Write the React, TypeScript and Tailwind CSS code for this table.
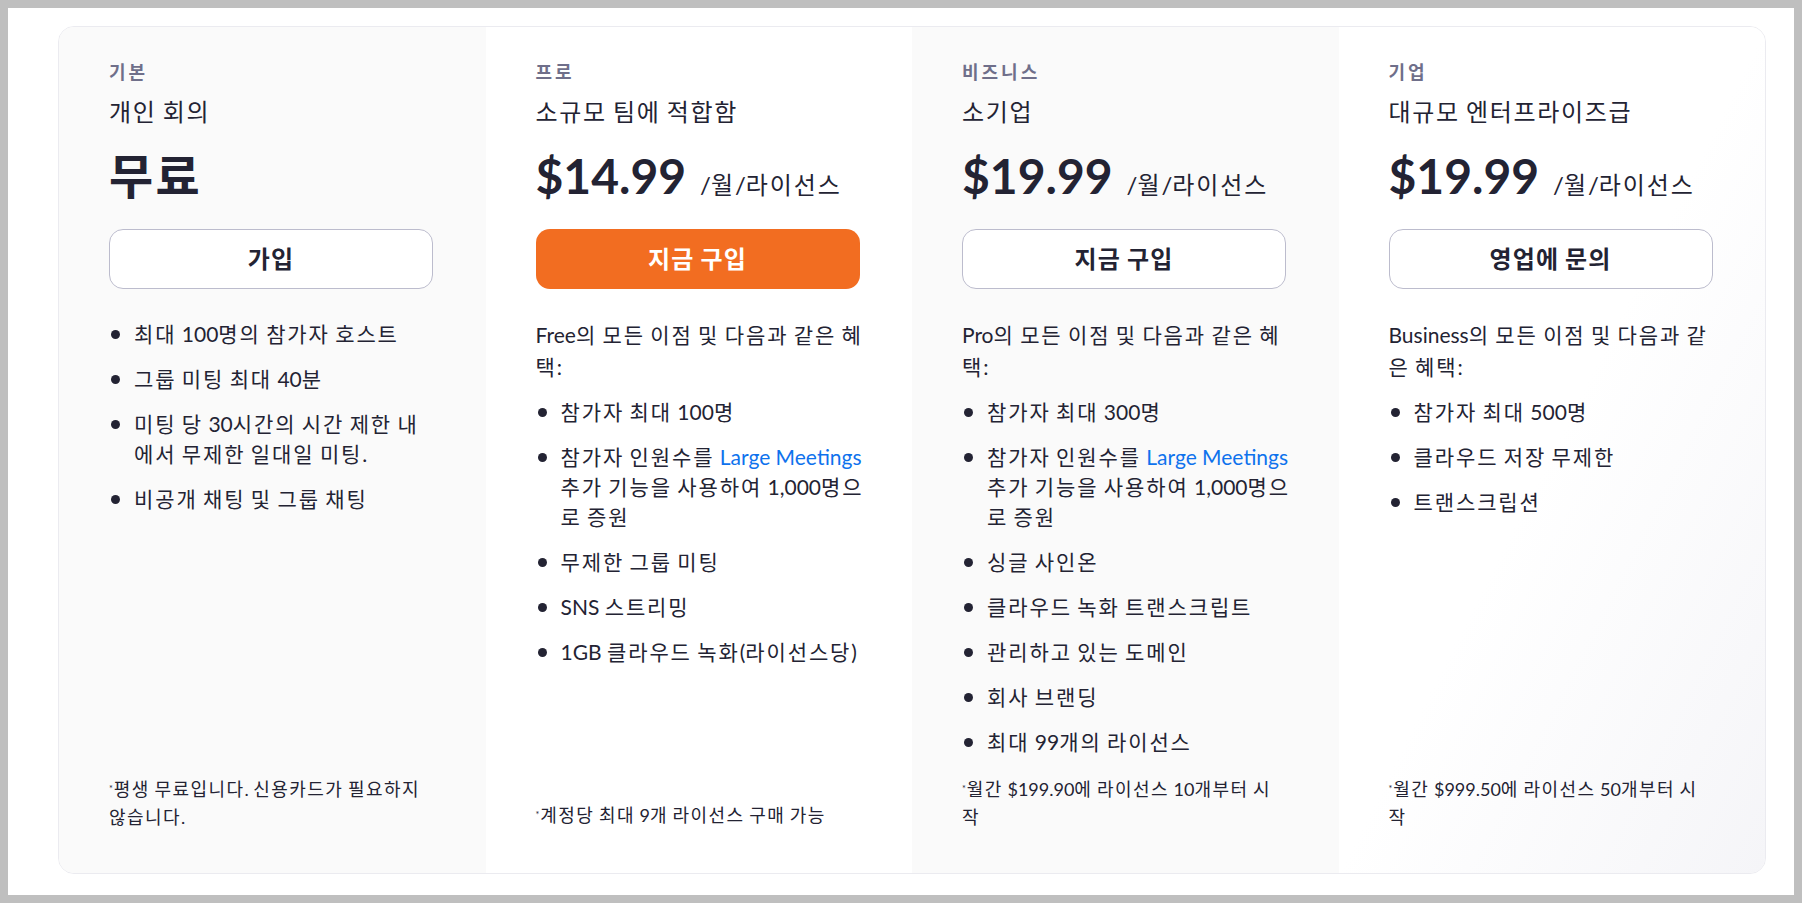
import React from "react";

const HANGUL = /([\u1100-\u11FF\u3130-\u318F\uAC00-\uD7AF]+)/;

const k = (s: string, cls: string, keyBase: string) =>
  s.split(HANGUL).map((part, i) =>
    i % 2 === 1 ? (
      <span key={keyBase + i} className={cls}>
        {part}
      </span>
    ) : (
      <React.Fragment key={keyBase + i}>{part}</React.Fragment>
    )
  );

const render = (s: string, cls: string) => {
  const lines = s.split("\n");
  return lines.map((line, li) => {
    const parts = line.split(/(\[\[.*?\]\])/);
    return (
      <React.Fragment key={li}>
        {li > 0 && <br />}
        {parts.map((p, pi) =>
          p.startsWith("[[") ? (
            <span key={pi} className="text-[#0e72ed]">
              {p.slice(2, -2)}
            </span>
          ) : (
            <React.Fragment key={pi}>{k(p, cls, `${li}-${pi}-`)}</React.Fragment>
          )
        )}
      </React.Fragment>
    );
  });
};

const Star = () => (
  <span className="relative -top-[2px] mr-[1px] align-middle text-[9px]">*</span>
);

type Plan = {
  label: string;
  title: string;
  price: string;
  suffix?: string;
  button: string;
  primary?: boolean;
  intro?: string;
  items: string[];
  note: string;
  bg: string;
};

const plans: Plan[] = [
  {
    label: "기본",
    title: "개인 회의",
    price: "무료",
    button: "가입",
    items: [
      "최대 100명의 참가자 호스트",
      "그룹 미팅 최대 40분",
      "미팅 당 30시간의 시간 제한 내\n에서 무제한 일대일 미팅.",
      "비공개 채팅 및 그룹 채팅",
    ],
    note: "평생 무료입니다. 신용카드가 필요하지\n않습니다.",
    bg: "bg-[#fafafa]",
  },
  {
    label: "프로",
    title: "소규모 팀에 적합함",
    price: "$14.99",
    suffix: "/월/라이선스",
    button: "지금 구입",
    primary: true,
    intro: "Free의 모든 이점 및 다음과 같은 혜\n택:",
    items: [
      "참가자 최대 100명",
      "참가자 인원수를 [[Large Meetings]]\n추가 기능을 사용하여 1,000명으\n로 증원",
      "무제한 그룹 미팅",
      "SNS 스트리밍",
      "1GB 클라우드 녹화(라이선스당)",
    ],
    note: "계정당 최대 9개 라이선스 구매 가능",
    bg: "bg-white",
  },
  {
    label: "비즈니스",
    title: "소기업",
    price: "$19.99",
    suffix: "/월/라이선스",
    button: "지금 구입",
    intro: "Pro의 모든 이점 및 다음과 같은 혜\n택:",
    items: [
      "참가자 최대 300명",
      "참가자 인원수를 [[Large Meetings]]\n추가 기능을 사용하여 1,000명으\n로 증원",
      "싱글 사인온",
      "클라우드 녹화 트랜스크립트",
      "관리하고 있는 도메인",
      "회사 브랜딩",
      "최대 99개의 라이선스",
    ],
    note: "월간 $199.90에 라이선스 10개부터 시\n작",
    bg: "bg-[#fafafa]",
  },
  {
    label: "기업",
    title: "대규모 엔터프라이즈급",
    price: "$19.99",
    suffix: "/월/라이선스",
    button: "영업에 문의",
    intro: "Business의 모든 이점 및 다음과 같\n은 혜택:",
    items: ["참가자 최대 500명", "클라우드 저장 무제한", "트랜스크립션"],
    note: "월간 $999.50에 라이선스 50개부터 시\n작",
    bg: "bg-linear-to-br from-white via-white to-[#f5f5f8]",
  },
];

const Column = ({ p }: { p: Plan }) => (
  <div className={`flex flex-col pl-[50px] pr-[52px] pt-[33px] pb-[43px] ${p.bg}`}>
    <div className="text-[18px] leading-[24px] font-semibold tracking-[3px] text-[#6f6f8a]">
      {p.label}
    </div>
    <div className="mt-[12px] whitespace-nowrap text-[24px] leading-[32px] text-[#232333]">
      {render(p.title, "tracking-[0.07em]")}
    </div>
    <div className="mt-[20px] flex h-[56px] items-baseline whitespace-nowrap text-[#232333]">
      <span className="text-[48px] leading-[56px] font-bold">
        {render(p.price, "tracking-[0.05em]")}
      </span>
      {p.suffix && (
        <span className="ml-[14px] text-[24px] leading-[32px]">
          {render(p.suffix, "tracking-[0.08em]")}
        </span>
      )}
    </div>
    <button
      className={
        p.primary
          ? "mt-[25px] h-[60px] w-[324px] rounded-[14px] bg-[#f26d21] text-[24px] font-bold text-white"
          : "mt-[25px] h-[60px] w-[324px] rounded-[14px] border border-[#bcbccd] bg-white text-[24px] font-bold text-[#232333]"
      }
    >
      {render(p.button, "tracking-[0.05em]")}
    </button>
    <div className="mt-[30px] text-[21px] text-[#232333]">
      {p.intro && (
        <div className="mb-[14px] whitespace-nowrap leading-[32px]">
          {render(p.intro, "tracking-[0.09em]")}
        </div>
      )}
      <ul className="flex flex-col gap-[15px] leading-[30px]">
        {p.items.map((it, i) => (
          <li key={i} className="flex items-start">
            <span className="mt-[11px] ml-[2px] mr-[14px] h-[9px] w-[9px] shrink-0 rounded-full bg-[#232333]" />
            <span className="whitespace-nowrap">{render(it, "tracking-[0.09em]")}</span>
          </li>
        ))}
      </ul>
    </div>
    <div className="mt-auto flex min-h-[52px] items-end">
      <div className="whitespace-nowrap text-[18px] leading-[26px] text-[#232333]">
        <Star />
        {render(p.note, "tracking-[0.08em]")}
      </div>
    </div>
  </div>
);

export default function App() {
  return (
    <div className="h-[903px] w-full bg-[#bfbfbf] p-[8px] font-['Lato','Noto_Sans_CJK_KR',sans-serif]">
      <div className="h-full w-full bg-white pl-[50px] pr-[28px] pt-[18px]">
        <div className="grid h-[848px] w-[1708px] grid-cols-4 overflow-hidden rounded-[16px] border border-[#ebebf0]">
          {plans.map((p, i) => (
            <Column key={i} p={p} />
          ))}
        </div>
      </div>
    </div>
  );
}
